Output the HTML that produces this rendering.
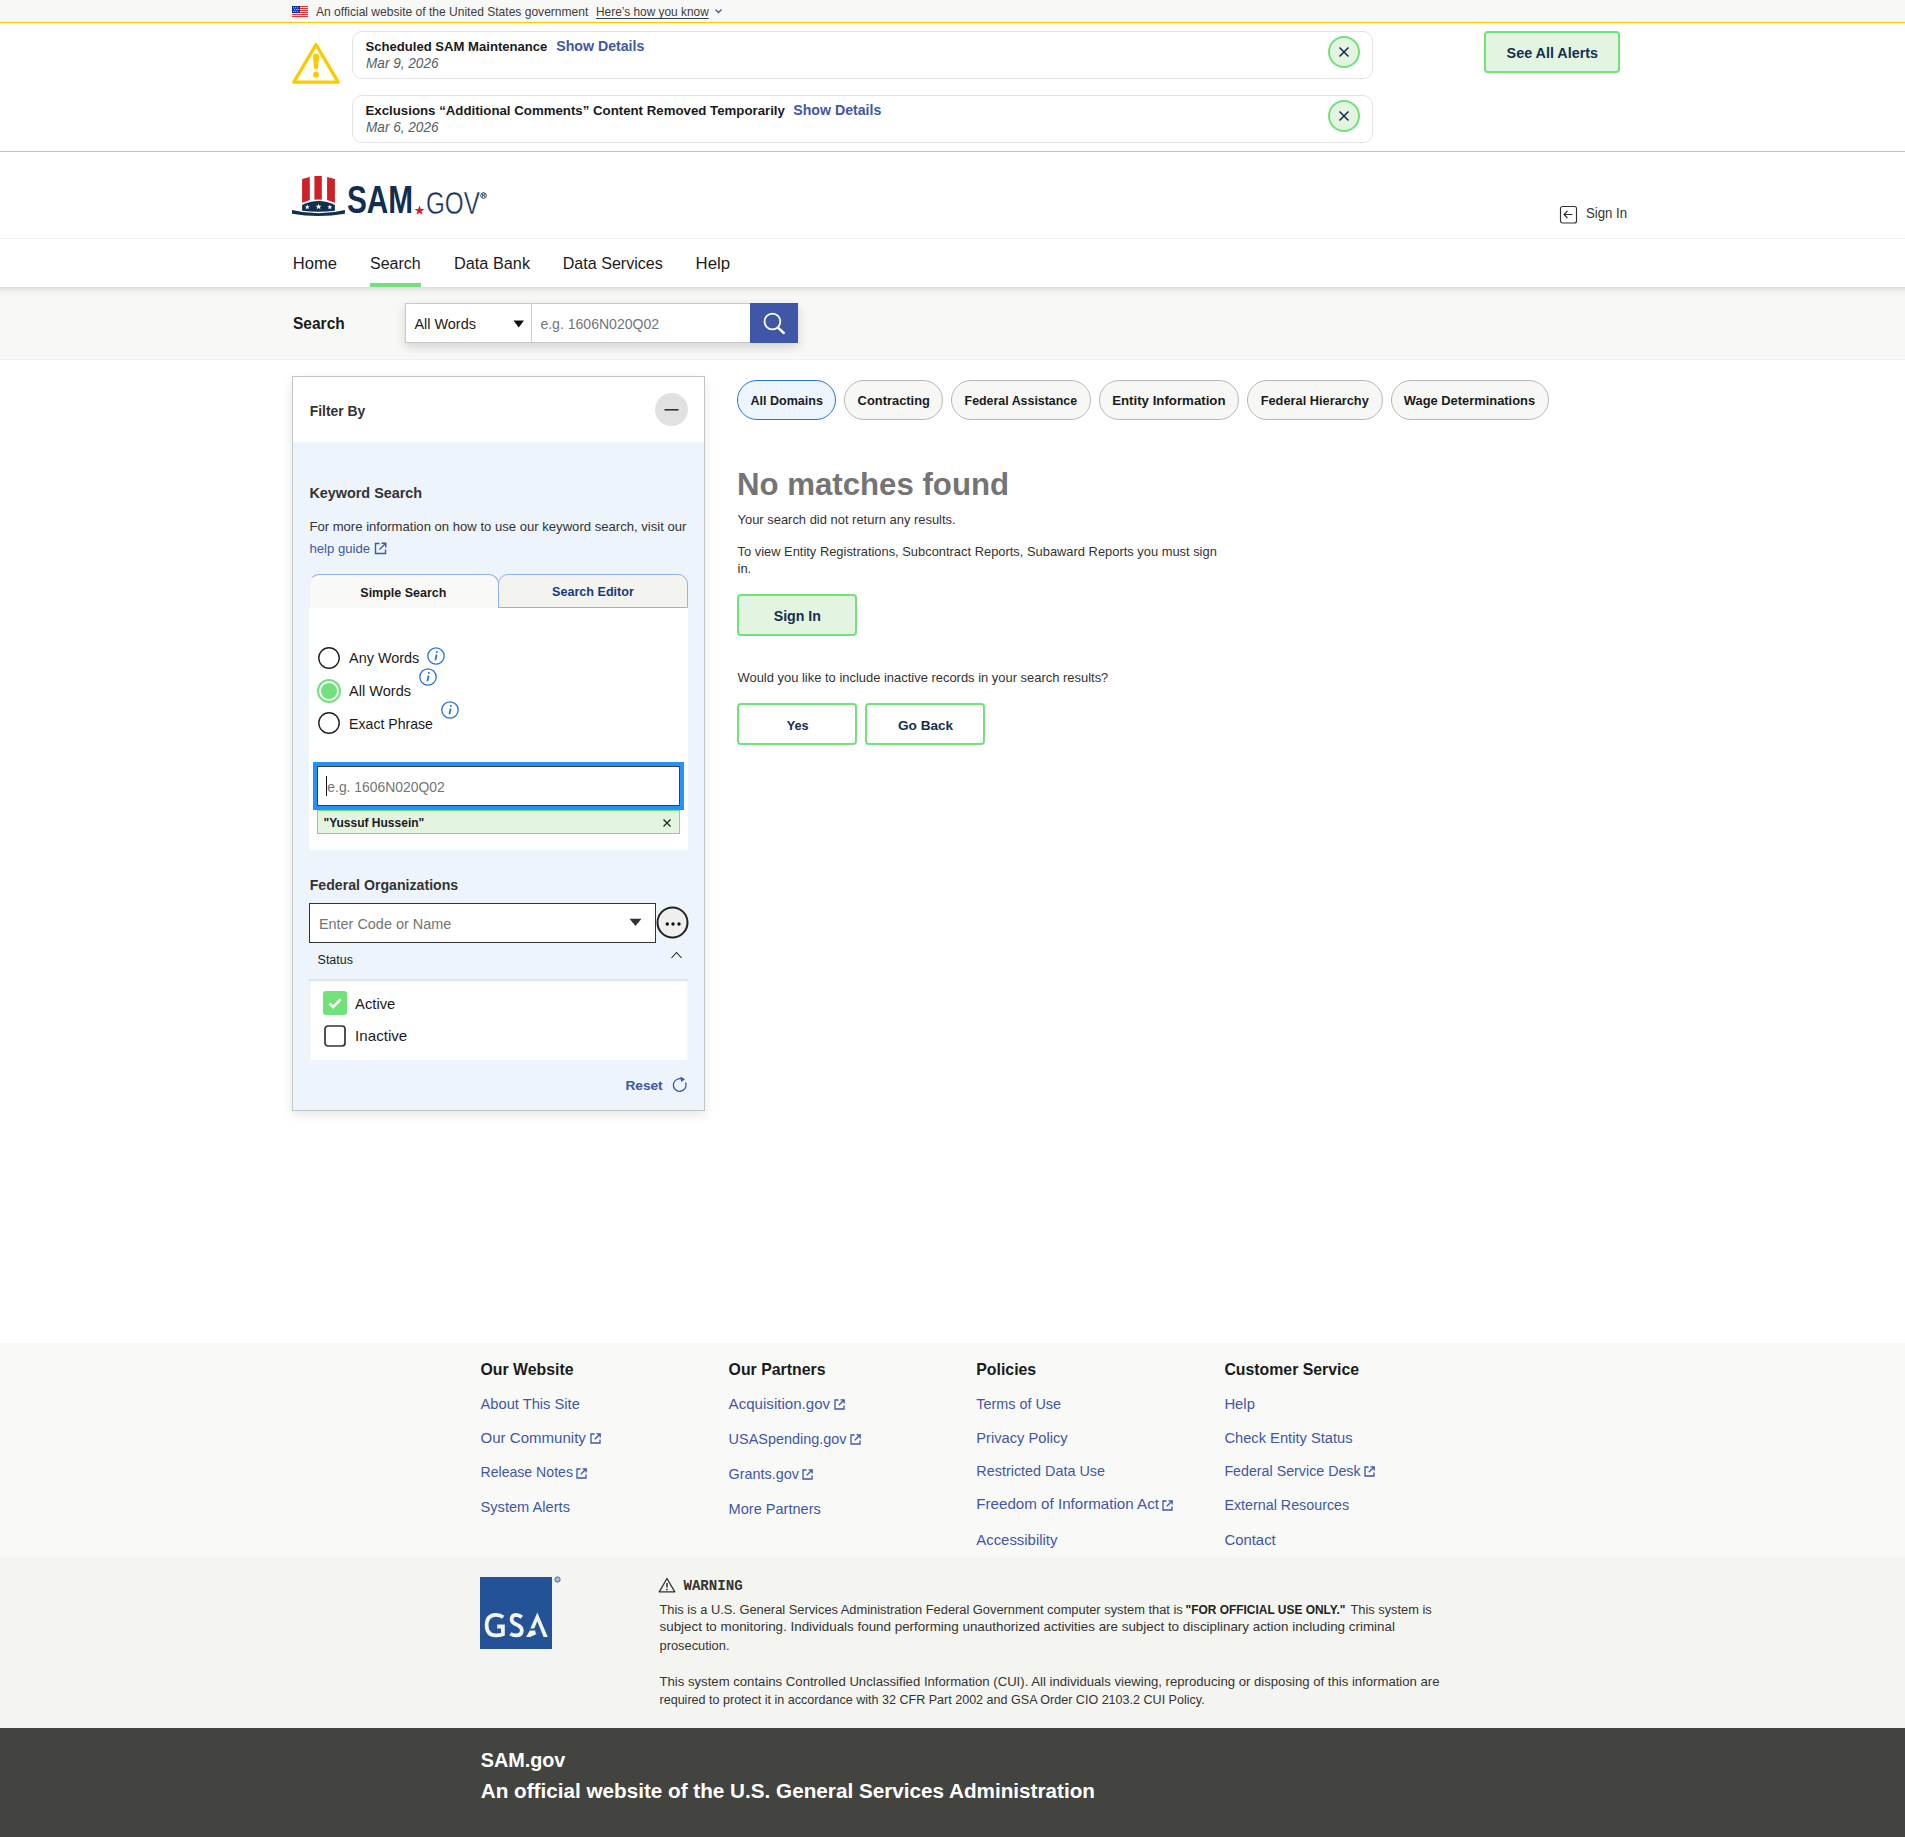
<!DOCTYPE html>
<html><head><meta charset="utf-8"><title>SAM.gov</title><style>
*{box-sizing:border-box}
html,body{margin:0;padding:0}
body{width:1905px;height:1837px;overflow:hidden;position:relative;background:#fff;font-family:"Liberation Sans",sans-serif}
.t{position:absolute;white-space:nowrap;line-height:1}
svg{display:block}
</style></head><body>
<div style="position:absolute;left:0px;top:0px;width:1905px;height:22px;background:#f8f8f6"></div>
<div style="position:absolute;left:0px;top:22px;width:1905px;height:1px;background:#fbcb00"></div>
<svg style="position:absolute;left:292px;top:6px;" width="16" height="11" viewBox="0 0 16 11"><rect x="0" y="0" width="16" height="11" fill="#fff"/><rect x="0" y="-0.1" width="16" height="1.2" fill="#d83933"/><rect x="0" y="1.9" width="16" height="1.2" fill="#d83933"/><rect x="0" y="3.9" width="16" height="1.2" fill="#d83933"/><rect x="0" y="5.9" width="16" height="1.2" fill="#d83933"/><rect x="0" y="7.9" width="16" height="1.2" fill="#d83933"/><rect x="0" y="9.9" width="16" height="1.2" fill="#d83933"/><rect x="0" y="0" width="8" height="7" fill="#0033a0"/><circle cx="1.7" cy="1.7" r="0.55" fill="#fff"/><circle cx="3.7" cy="1.7" r="0.55" fill="#fff"/><circle cx="5.7" cy="1.7" r="0.55" fill="#fff"/><circle cx="2.7" cy="3.5" r="0.55" fill="#fff"/><circle cx="4.7" cy="3.5" r="0.55" fill="#fff"/><circle cx="6.7" cy="3.5" r="0.55" fill="#fff"/><circle cx="1.7" cy="5.3" r="0.55" fill="#fff"/><circle cx="3.7" cy="5.3" r="0.55" fill="#fff"/><circle cx="5.7" cy="5.3" r="0.55" fill="#fff"/></svg>
<div class="t " style="left:316.0px;top:6px;font-size:12.05px;font-weight:normal;font-style:normal;font-family:'Liberation Sans',sans-serif;color:#3d3d3d;">An official website of the United States government</div>
<div class="t " style="left:596.0px;top:7px;font-size:11.9px;font-weight:normal;font-style:normal;font-family:'Liberation Sans',sans-serif;color:#3d3d3d;text-decoration:underline;text-underline-offset:2px;">Here&#8217;s how you know</div>
<svg style="position:absolute;left:714px;top:7px;" width="9" height="8" viewBox="0 0 9 8"><path d="M1.5 2.5 L4.5 5.5 L7.5 2.5" fill="none" stroke="#3f57a6" stroke-width="1.3"/></svg>
<div style="position:absolute;left:0px;top:151px;width:1905px;height:1px;background:#fbcb00"></div>
<svg style="position:absolute;left:291px;top:41px;" width="50" height="44" viewBox="0 0 50 44"><path d="M25 3.6 L47.2 41.2 L2.8 41.2 Z" fill="none" stroke="#fbcb00" stroke-width="3.3" stroke-linejoin="round"/><path d="M22 15.5 Q22 12.6 25 12.6 Q28 12.6 28 15.5 L27 27.5 Q25 28.8 23 27.5 Z" fill="#fbcb00"/><circle cx="25" cy="33.8" r="3" fill="#fbcb00"/></svg>
<div style="position:absolute;left:352px;top:31px;width:1021px;height:48px;border:1px solid #e2e2e2;border-radius:10px;background:#fff"></div>
<div class="t " style="left:365.5px;top:40px;font-size:13.1px;font-weight:bold;font-style:normal;font-family:'Liberation Sans',sans-serif;color:#1b1b1b;">Scheduled SAM Maintenance</div>
<div class="t " style="left:556.3px;top:39px;font-size:14.15px;font-weight:bold;font-style:normal;font-family:'Liberation Sans',sans-serif;color:#3f57a6;">Show Details</div>
<div class="t " style="left:365.5px;top:56px;font-size:14.4px;font-weight:normal;font-style:italic;font-family:'Liberation Sans',sans-serif;color:#565c65;transform:scaleX(0.9442);transform-origin:0 0;">Mar 9, 2026</div>
<svg style="position:absolute;left:1327px;top:35px;" width="34" height="34" viewBox="0 0 34 34"><circle cx="17" cy="17" r="15" fill="#e3f5e1" stroke="#70e17b" stroke-width="2"/><path d="M12.5 12.5 L21.5 21.5 M21.5 12.5 L12.5 21.5" stroke="#162e51" stroke-width="1.6"/></svg>
<div style="position:absolute;left:352px;top:95px;width:1021px;height:48px;border:1px solid #e2e2e2;border-radius:10px;background:#fff"></div>
<div class="t " style="left:365.5px;top:104px;font-size:13.25px;font-weight:bold;font-style:normal;font-family:'Liberation Sans',sans-serif;color:#1b1b1b;">Exclusions &#8220;Additional Comments&#8221; Content Removed Temporarily</div>
<div class="t " style="left:793.3px;top:103px;font-size:14.15px;font-weight:bold;font-style:normal;font-family:'Liberation Sans',sans-serif;color:#3f57a6;">Show Details</div>
<div class="t " style="left:365.5px;top:120px;font-size:14.4px;font-weight:normal;font-style:italic;font-family:'Liberation Sans',sans-serif;color:#565c65;transform:scaleX(0.9442);transform-origin:0 0;">Mar 6, 2026</div>
<svg style="position:absolute;left:1327px;top:99px;" width="34" height="34" viewBox="0 0 34 34"><circle cx="17" cy="17" r="15" fill="#e3f5e1" stroke="#70e17b" stroke-width="2"/><path d="M12.5 12.5 L21.5 21.5 M21.5 12.5 L12.5 21.5" stroke="#162e51" stroke-width="1.6"/></svg>
<div style="position:absolute;left:1484px;top:31px;width:136px;height:42px;border:2px solid #70e17b;border-radius:4px;background:#e3f5e1"></div>
<div class="t " style="left:1506.6px;top:46px;font-size:14.35px;font-weight:bold;font-style:normal;font-family:'Liberation Sans',sans-serif;color:#162e51;">See All Alerts</div>
<svg style="position:absolute;left:288px;top:170px;" width="64" height="52" viewBox="0 0 64 52"><path d="M14.1 9.1 L21.8 6.9 L21.8 29.9 L14.1 32.8 Z" fill="#cd2027"/><path d="M26.4 6 L33.8 6 L33.8 29.7 Q30.1 29.1 26.4 29.7 Z" fill="#cd2027"/><path d="M39.1 6.9 L46.9 9.1 L46.9 32.8 L39.1 29.9 Z" fill="#cd2027"/><path d="M14.1 34.9 Q30.5 27.3 46.9 34.9 L46.9 40.8 Q30.5 42.6 14.1 40.8 Z" fill="#122e51"/><polygon points="19.30,34.60 19.94,36.32 21.77,36.40 20.34,37.54 20.83,39.30 19.30,38.29 17.77,39.30 18.26,37.54 16.83,36.40 18.66,36.32" fill="#fff"/><polygon points="30.60,33.70 31.37,35.75 33.55,35.84 31.84,37.20 32.42,39.31 30.60,38.10 28.78,39.31 29.36,37.20 27.65,35.84 29.83,35.75" fill="#fff"/><polygon points="41.80,34.60 42.44,36.32 44.27,36.40 42.84,37.54 43.33,39.30 41.80,38.29 40.27,39.30 40.76,37.54 39.33,36.40 41.16,36.32" fill="#fff"/><path d="M4 40 Q30.4 46.6 56.9 40 L56.9 43.7 Q30.4 48.1 4 43.7 Z" fill="#122e51"/></svg>
<div class="t " style="left:347.0px;top:181px;font-size:38.4px;font-weight:bold;font-style:normal;font-family:'Liberation Sans',sans-serif;color:#112e51;transform:scaleX(0.775);transform-origin:0 0;letter-spacing:0px;">SAM</div>
<svg style="position:absolute;left:414px;top:205px;" width="11" height="11" viewBox="0 0 11 11"><path d="M5.5 0.5 l1.3 3.4 3.6 .1 -2.9 2.2 1 3.5 -3-2 -3 2 1-3.5 -2.9-2.2 3.6-.1z" fill="#d61f2b"/></svg>
<div class="t " style="left:425.5px;top:188px;font-size:30.5px;font-weight:normal;font-style:normal;font-family:'Liberation Sans',sans-serif;color:#112e51;transform:scaleX(0.795);transform-origin:0 0;-webkit-text-stroke:0.4px #fff;">GOV</div>
<svg style="position:absolute;left:480px;top:192px;" width="8" height="8" viewBox="0 0 8 8"><circle cx="3.5" cy="3.5" r="2.8" fill="none" stroke="#112e51" stroke-width="0.9"/><path d="M2.5 5.2 V2 H4 Q5 2 5 2.8 Q5 3.6 4 3.6 H2.5 M3.8 3.6 L5 5.2" fill="none" stroke="#112e51" stroke-width="0.7"/></svg>
<svg style="position:absolute;left:1559px;top:205px;" width="19" height="19" viewBox="0 0 19 19"><rect x="1.5" y="1.5" width="16" height="16.5" rx="2" fill="none" stroke="#333" stroke-width="1.15"/><path d="M5 9.5 H13.5 M8.5 6 L5 9.5 L8.5 13" fill="none" stroke="#333" stroke-width="1.2"/></svg>
<div class="t " style="left:1586.1px;top:205px;font-size:15.1px;font-weight:normal;font-style:normal;font-family:'Liberation Sans',sans-serif;color:#333;transform:scaleX(0.8750);transform-origin:0 0;">Sign In</div>
<div style="position:absolute;left:0px;top:238px;width:1905px;height:1px;background:#f2f2ee"></div>
<div style="position:absolute;left:0px;top:239px;width:1905px;height:48px;background:#fff"></div>
<div class="t " style="left:292.7px;top:256px;font-size:16.6px;font-weight:normal;font-style:normal;font-family:'Liberation Sans',sans-serif;color:#1b1b1b;z-index:3;">Home</div>
<div class="t " style="left:370.0px;top:256px;font-size:16.0px;font-weight:normal;font-style:normal;font-family:'Liberation Sans',sans-serif;color:#1b1b1b;z-index:3;">Search</div>
<div class="t " style="left:454.0px;top:255px;font-size:16.3px;font-weight:normal;font-style:normal;font-family:'Liberation Sans',sans-serif;color:#1b1b1b;z-index:3;">Data Bank</div>
<div class="t " style="left:562.7px;top:255px;font-size:16.1px;font-weight:normal;font-style:normal;font-family:'Liberation Sans',sans-serif;color:#1b1b1b;z-index:3;">Data Services</div>
<div class="t " style="left:695.6px;top:256px;font-size:16.75px;font-weight:normal;font-style:normal;font-family:'Liberation Sans',sans-serif;color:#1b1b1b;z-index:3;">Help</div>
<div style="position:absolute;left:370px;top:283px;width:51px;height:4px;background:#70e17b;z-index:3"></div>
<div style="position:absolute;left:0px;top:287px;width:1905px;height:73px;background:#f8f8f6"></div>
<div style="position:absolute;left:0px;top:359px;width:1905px;height:1px;background:#f1f1ed"></div>
<div style="position:absolute;left:0px;top:287px;width:1905px;height:9px;background:linear-gradient(rgba(0,0,0,0.11),rgba(0,0,0,0.03) 50%,rgba(0,0,0,0))"></div>
<div class="t " style="left:292.5px;top:315px;font-size:17.3px;font-weight:bold;font-style:normal;font-family:'Liberation Sans',sans-serif;color:#1b1b1b;transform:scaleX(0.8977);transform-origin:0 0;">Search</div>
<div style="position:absolute;left:405px;top:303px;width:393px;height:40px;box-shadow:0 4px 10px rgba(0,0,0,0.15);background:#fff"></div>
<div style="position:absolute;left:405px;top:303px;width:127px;height:40px;border:1px solid #c9c9c9;background:#fff"></div>
<div class="t " style="left:414.4px;top:317px;font-size:14.45px;font-weight:normal;font-style:normal;font-family:'Liberation Sans',sans-serif;color:#1b1b1b;">All Words</div>
<svg style="position:absolute;left:513px;top:320px;" width="12" height="8" viewBox="0 0 12 8"><path d="M0.5 0.5 L11 0.5 L5.75 7.5 Z" fill="#111"/></svg>
<div style="position:absolute;left:531px;top:303px;width:220px;height:40px;border:1px solid #c9c9c9;border-left:1px solid #d0d0d0;background:#fff"></div>
<div class="t " style="left:540.4px;top:317px;font-size:14.05px;font-weight:normal;font-style:normal;font-family:'Liberation Sans',sans-serif;color:#71767a;">e.g. 1606N020Q02</div>
<div style="position:absolute;left:750px;top:303px;width:48px;height:40px;background:#4057a7"></div>
<svg style="position:absolute;left:762px;top:312px;" width="26" height="26" viewBox="0 0 26 26"><circle cx="10.4" cy="9.5" r="7.9" fill="none" stroke="#fff" stroke-width="1.8"/><path d="M16 15.6 L21.8 21" stroke="#fff" stroke-width="2.4" stroke-linecap="round"/></svg>
<div style="position:absolute;left:292px;top:376px;width:413px;height:735px;border:1px solid #c4c4c4;background:#edf4fb;box-shadow:0 4px 10px rgba(0,0,0,0.1)"></div>
<div style="position:absolute;left:293px;top:377px;width:411px;height:65px;background:#fff"></div>
<div class="t " style="left:309.7px;top:405px;font-size:13.9px;font-weight:bold;font-style:normal;font-family:'Liberation Sans',sans-serif;color:#333;">Filter By</div>
<svg style="position:absolute;left:655px;top:393px;" width="33" height="33" viewBox="0 0 33 33"><circle cx="16.5" cy="16.5" r="16.5" fill="#e1e1e1"/><path d="M9.5 16.8 H23.5" stroke="#112e51" stroke-width="1.5"/></svg>
<div class="t " style="left:309.4px;top:486px;font-size:14.4px;font-weight:bold;font-style:normal;font-family:'Liberation Sans',sans-serif;color:#333;">Keyword Search</div>
<div class="t " style="left:309.4px;top:520px;font-size:13.1px;font-weight:normal;font-style:normal;font-family:'Liberation Sans',sans-serif;color:#333;">For more information on how to use our keyword search, visit our</div>
<div class="t " style="left:309.4px;top:542px;font-size:13.15px;font-weight:normal;font-style:normal;font-family:'Liberation Sans',sans-serif;color:#3f57a6;">help guide</div>
<svg style="position:absolute;left:374px;top:542px;" width="13" height="13" viewBox="0 0 13 13"><path d="M5.5 1.5 H1.5 V11.5 H11.5 V7.5" fill="none" stroke="#3f57a6" stroke-width="1.4"/><path d="M7.5 1.2 H11.8 V5.5 M11.5 1.5 L5.5 7.5" fill="none" stroke="#3f57a6" stroke-width="1.4"/></svg>
<div style="position:absolute;left:309px;top:574px;width:190px;height:34px;border:1px solid #8fb3f0;border-bottom:none;border-left-color:rgba(143,179,240,0.15);border-radius:10px 10px 0 0;background:#f9f9f7"></div>
<div style="position:absolute;left:498px;top:574px;width:190px;height:34px;border:1px solid #8fb3f0;border-radius:10px 10px 0 0;background:#f3f4ef"></div>
<div class="t " style="left:360.3px;top:587px;font-size:12.5px;font-weight:bold;font-style:normal;font-family:'Liberation Sans',sans-serif;color:#1b1b1b;">Simple Search</div>
<div class="t " style="left:552.0px;top:586px;font-size:12.6px;font-weight:bold;font-style:normal;font-family:'Liberation Sans',sans-serif;color:#1a3a78;">Search Editor</div>
<div style="position:absolute;left:309px;top:608px;width:379px;height:242px;background:#fff"></div>
<svg style="position:absolute;left:318px;top:647px;" width="22" height="22" viewBox="0 0 22 22"><circle cx="11" cy="11" r="10.2" fill="#fff" stroke="#222" stroke-width="1.4"/></svg>
<svg style="position:absolute;left:317px;top:679px;" width="24" height="24" viewBox="0 0 24 24"><circle cx="12" cy="12" r="11" fill="#fff" stroke="#70e17b" stroke-width="2"/><circle cx="12" cy="12" r="8" fill="#70e17b"/></svg>
<svg style="position:absolute;left:318px;top:712px;" width="22" height="22" viewBox="0 0 22 22"><circle cx="11" cy="11" r="10.2" fill="#fff" stroke="#222" stroke-width="1.4"/></svg>
<div class="t " style="left:349.1px;top:651px;font-size:14.4px;font-weight:normal;font-style:normal;font-family:'Liberation Sans',sans-serif;color:#1b1b1b;">Any Words</div>
<div class="t " style="left:349.1px;top:684px;font-size:14.55px;font-weight:normal;font-style:normal;font-family:'Liberation Sans',sans-serif;color:#1b1b1b;">All Words</div>
<div class="t " style="left:349.1px;top:717px;font-size:14.1px;font-weight:normal;font-style:normal;font-family:'Liberation Sans',sans-serif;color:#1b1b1b;">Exact Phrase</div>
<svg style="position:absolute;left:427px;top:647px;" width="18" height="18" viewBox="0 0 18 18"><circle cx="9" cy="9" r="8.2" fill="none" stroke="#2672de" stroke-width="1.3"/><path d="M9.6 7.5 L8.4 13.2" stroke="#2672de" stroke-width="1.7"/><circle cx="9.9" cy="5" r="1" fill="#2672de"/></svg>
<svg style="position:absolute;left:419px;top:668px;" width="18" height="18" viewBox="0 0 18 18"><circle cx="9" cy="9" r="8.2" fill="none" stroke="#2672de" stroke-width="1.3"/><path d="M9.6 7.5 L8.4 13.2" stroke="#2672de" stroke-width="1.7"/><circle cx="9.9" cy="5" r="1" fill="#2672de"/></svg>
<svg style="position:absolute;left:441px;top:701px;" width="18" height="18" viewBox="0 0 18 18"><circle cx="9" cy="9" r="8.2" fill="none" stroke="#2672de" stroke-width="1.3"/><path d="M9.6 7.5 L8.4 13.2" stroke="#2672de" stroke-width="1.7"/><circle cx="9.9" cy="5" r="1" fill="#2672de"/></svg>
<div style="position:absolute;left:313px;top:762px;width:371px;height:48px;background:#2491ff"></div>
<div style="position:absolute;left:317px;top:766px;width:363px;height:40px;border:1px solid #3d3d3d;background:#fff"></div>
<div style="position:absolute;left:326px;top:776px;width:1px;height:20px;background:#111"></div>
<div class="t " style="left:327.3px;top:781px;font-size:13.9px;font-weight:normal;font-style:normal;font-family:'Liberation Sans',sans-serif;color:#71767a;">e.g. 1606N020Q02</div>
<div style="position:absolute;left:317px;top:810px;width:363px;height:24px;border:1px solid #70e17b;background:#e3f5e1"></div>
<div class="t " style="left:323.5px;top:817px;font-size:12.0px;font-weight:bold;font-style:normal;font-family:'Liberation Sans',sans-serif;color:#1b1b1b;">&quot;Yussuf Hussein&quot;</div>
<svg style="position:absolute;left:662px;top:818px;" width="10" height="10" viewBox="0 0 10 10"><path d="M1.5 1.5 L8.5 8.5 M8.5 1.5 L1.5 8.5" stroke="#222" stroke-width="1.3"/></svg>
<div class="t " style="left:309.7px;top:878px;font-size:14.15px;font-weight:bold;font-style:normal;font-family:'Liberation Sans',sans-serif;color:#333;">Federal Organizations</div>
<div style="position:absolute;left:309px;top:903px;width:347px;height:40px;border:1px solid #333;background:#fff"></div>
<div class="t " style="left:318.9px;top:917px;font-size:14.45px;font-weight:normal;font-style:normal;font-family:'Liberation Sans',sans-serif;color:#757575;">Enter Code or Name</div>
<svg style="position:absolute;left:629px;top:918px;" width="14" height="9" viewBox="0 0 14 9"><path d="M0.5 0.8 L12.5 0.8 L6.5 8 Z" fill="#333"/></svg>
<svg style="position:absolute;left:656px;top:906px;" width="33" height="33" viewBox="0 0 33 33"><circle cx="16.5" cy="16.5" r="15" fill="#efefef" stroke="#222" stroke-width="2"/><circle cx="11.3" cy="18" r="1.7" fill="#111"/><circle cx="17" cy="18" r="1.7" fill="#111"/><circle cx="23" cy="18" r="1.7" fill="#111"/></svg>
<div class="t " style="left:317.6px;top:954px;font-size:12.45px;font-weight:normal;font-style:normal;font-family:'Liberation Sans',sans-serif;color:#1b1b1b;">Status</div>
<svg style="position:absolute;left:670px;top:950px;" width="13" height="10" viewBox="0 0 13 10"><path d="M1.5 8 L6.5 2.5 L11.5 8" fill="none" stroke="#222" stroke-width="1.1"/></svg>
<div style="position:absolute;left:309px;top:979px;width:379px;height:81px;background:#fff;box-shadow:inset 0 2px 2px rgba(0,0,0,0.12), inset 1px 0 1px rgba(0,0,0,0.05)"></div>
<svg style="position:absolute;left:323px;top:991px;" width="24" height="24" viewBox="0 0 24 24"><rect x="0" y="0" width="24" height="24" rx="3" fill="#70e17b"/><path d="M6.5 12.5 L10.2 16 L17.5 8.5" fill="none" stroke="#fff" stroke-width="2.6"/></svg>
<svg style="position:absolute;left:324px;top:1025px;" width="22" height="22" viewBox="0 0 22 22"><rect x="1" y="1" width="20" height="20" rx="3" fill="#fff" stroke="#333" stroke-width="1.7"/></svg>
<div class="t " style="left:355.1px;top:997px;font-size:14.75px;font-weight:normal;font-style:normal;font-family:'Liberation Sans',sans-serif;color:#1b1b1b;">Active</div>
<div class="t " style="left:355.1px;top:1028px;font-size:15.15px;font-weight:normal;font-style:normal;font-family:'Liberation Sans',sans-serif;color:#1b1b1b;">Inactive</div>
<div class="t " style="left:625.5px;top:1079px;font-size:13.65px;font-weight:bold;font-style:normal;font-family:'Liberation Sans',sans-serif;color:#3f57a6;">Reset</div>
<svg style="position:absolute;left:672px;top:1075px;" width="16" height="17" viewBox="0 0 16 17"><path d="M10.8 4.5 A6.3 6.3 0 1 0 13.5 7.5" fill="none" stroke="#3f57a6" stroke-width="1.3"/><path d="M8.5 1.5 L13 4.3 L9.2 7 Z" fill="#3f57a6"/></svg>
<div style="position:absolute;left:737px;top:380px;width:99px;height:40px;border:1px solid #2672de;border-radius:20px;background:#edf5ff"></div>
<div class="t " style="left:750.4px;top:395px;font-size:12.55px;font-weight:bold;font-style:normal;font-family:'Liberation Sans',sans-serif;color:#1b1b1b;">All Domains</div>
<div style="position:absolute;left:844px;top:380px;width:99px;height:40px;border:1px solid #b8b8b8;border-radius:20px;background:#f7f7f5"></div>
<div class="t " style="left:857.6px;top:395px;font-size:12.9px;font-weight:bold;font-style:normal;font-family:'Liberation Sans',sans-serif;color:#1b1b1b;">Contracting</div>
<div style="position:absolute;left:951px;top:380px;width:140px;height:40px;border:1px solid #b8b8b8;border-radius:20px;background:#f7f7f5"></div>
<div class="t " style="left:964.6px;top:395px;font-size:12.4px;font-weight:bold;font-style:normal;font-family:'Liberation Sans',sans-serif;color:#1b1b1b;">Federal Assistance</div>
<div style="position:absolute;left:1099px;top:380px;width:140px;height:40px;border:1px solid #b8b8b8;border-radius:20px;background:#f7f7f5"></div>
<div class="t " style="left:1112.2px;top:394px;font-size:13.25px;font-weight:bold;font-style:normal;font-family:'Liberation Sans',sans-serif;color:#1b1b1b;">Entity Information</div>
<div style="position:absolute;left:1247px;top:380px;width:136px;height:40px;border:1px solid #b8b8b8;border-radius:20px;background:#f7f7f5"></div>
<div class="t " style="left:1260.7px;top:395px;font-size:12.8px;font-weight:bold;font-style:normal;font-family:'Liberation Sans',sans-serif;color:#1b1b1b;">Federal Hierarchy</div>
<div style="position:absolute;left:1391px;top:380px;width:158px;height:40px;border:1px solid #b8b8b8;border-radius:20px;background:#f7f7f5"></div>
<div class="t " style="left:1403.8px;top:395px;font-size:12.9px;font-weight:bold;font-style:normal;font-family:'Liberation Sans',sans-serif;color:#1b1b1b;">Wage Determinations</div>
<div class="t " style="left:737.0px;top:469px;font-size:31.2px;font-weight:bold;font-style:normal;font-family:'Liberation Sans',sans-serif;color:#747474;">No matches found</div>
<div class="t " style="left:737.5px;top:514px;font-size:12.95px;font-weight:normal;font-style:normal;font-family:'Liberation Sans',sans-serif;color:#333;">Your search did not return any results.</div>
<div class="t " style="left:737.5px;top:546px;font-size:12.9px;font-weight:normal;font-style:normal;font-family:'Liberation Sans',sans-serif;color:#333;">To view Entity Registrations, Subcontract Reports, Subaward Reports you must sign</div>
<div class="t " style="left:737.5px;top:562px;font-size:13.0px;font-weight:normal;font-style:normal;font-family:'Liberation Sans',sans-serif;color:#333;">in.</div>
<div style="position:absolute;left:737px;top:594px;width:120px;height:42px;border:2px solid #70e17b;border-radius:4px;background:#e3f5e1"></div>
<div class="t " style="left:773.7px;top:609px;font-size:14.2px;font-weight:bold;font-style:normal;font-family:'Liberation Sans',sans-serif;color:#162e51;">Sign In</div>
<div class="t " style="left:737.5px;top:672px;font-size:12.95px;font-weight:normal;font-style:normal;font-family:'Liberation Sans',sans-serif;color:#333;">Would you like to include inactive records in your search results?</div>
<div style="position:absolute;left:737px;top:703px;width:120px;height:42px;border:2px solid #70e17b;border-radius:4px;background:#fff"></div>
<div style="position:absolute;left:865px;top:703px;width:120px;height:42px;border:2px solid #70e17b;border-radius:4px;background:#fff"></div>
<div class="t " style="left:786.7px;top:720px;font-size:12.75px;font-weight:bold;font-style:normal;font-family:'Liberation Sans',sans-serif;color:#162e51;">Yes</div>
<div class="t " style="left:898.0px;top:719px;font-size:13.6px;font-weight:bold;font-style:normal;font-family:'Liberation Sans',sans-serif;color:#162e51;">Go Back</div>
<div style="position:absolute;left:0px;top:1343px;width:1905px;height:214px;background:#f9f9f7"></div>
<div class="t " style="left:480.5px;top:1362px;font-size:15.85px;font-weight:bold;font-style:normal;font-family:'Liberation Sans',sans-serif;color:#1b1b1b;">Our Website</div>
<div class="t " style="left:480.5px;top:1397px;font-size:14.7px;font-weight:normal;font-style:normal;font-family:'Liberation Sans',sans-serif;color:#3f57a6;">About This Site</div>
<div class="t " style="left:480.5px;top:1430px;font-size:15.05px;font-weight:normal;font-style:normal;font-family:'Liberation Sans',sans-serif;color:#3f57a6;">Our Community</div>
<svg style="position:absolute;left:590px;top:1433px;" width="11" height="11" viewBox="0 0 11 11"><path d="M4.5 1 H1 V10 H10 V6.5" fill="none" stroke="#3f57a6" stroke-width="1.3"/><path d="M6.5 .8 H10.2 V4.5 M10 1 L4.8 6.2" fill="none" stroke="#3f57a6" stroke-width="1.3"/></svg>
<div class="t " style="left:480.5px;top:1465px;font-size:14.1px;font-weight:normal;font-style:normal;font-family:'Liberation Sans',sans-serif;color:#3f57a6;">Release Notes</div>
<svg style="position:absolute;left:576px;top:1468px;" width="11" height="11" viewBox="0 0 11 11"><path d="M4.5 1 H1 V10 H10 V6.5" fill="none" stroke="#3f57a6" stroke-width="1.3"/><path d="M6.5 .8 H10.2 V4.5 M10 1 L4.8 6.2" fill="none" stroke="#3f57a6" stroke-width="1.3"/></svg>
<div class="t " style="left:480.5px;top:1500px;font-size:14.65px;font-weight:normal;font-style:normal;font-family:'Liberation Sans',sans-serif;color:#3f57a6;">System Alerts</div>
<div class="t " style="left:728.6px;top:1362px;font-size:15.85px;font-weight:bold;font-style:normal;font-family:'Liberation Sans',sans-serif;color:#1b1b1b;">Our Partners</div>
<div class="t " style="left:728.6px;top:1396px;font-size:15.1px;font-weight:normal;font-style:normal;font-family:'Liberation Sans',sans-serif;color:#3f57a6;">Acquisition.gov</div>
<svg style="position:absolute;left:834px;top:1399px;" width="11" height="11" viewBox="0 0 11 11"><path d="M4.5 1 H1 V10 H10 V6.5" fill="none" stroke="#3f57a6" stroke-width="1.3"/><path d="M6.5 .8 H10.2 V4.5 M10 1 L4.8 6.2" fill="none" stroke="#3f57a6" stroke-width="1.3"/></svg>
<div class="t " style="left:728.6px;top:1432px;font-size:14.45px;font-weight:normal;font-style:normal;font-family:'Liberation Sans',sans-serif;color:#3f57a6;">USASpending.gov</div>
<svg style="position:absolute;left:850px;top:1434px;" width="11" height="11" viewBox="0 0 11 11"><path d="M4.5 1 H1 V10 H10 V6.5" fill="none" stroke="#3f57a6" stroke-width="1.3"/><path d="M6.5 .8 H10.2 V4.5 M10 1 L4.8 6.2" fill="none" stroke="#3f57a6" stroke-width="1.3"/></svg>
<div class="t " style="left:728.6px;top:1467px;font-size:14.4px;font-weight:normal;font-style:normal;font-family:'Liberation Sans',sans-serif;color:#3f57a6;">Grants.gov</div>
<svg style="position:absolute;left:802px;top:1469px;" width="11" height="11" viewBox="0 0 11 11"><path d="M4.5 1 H1 V10 H10 V6.5" fill="none" stroke="#3f57a6" stroke-width="1.3"/><path d="M6.5 .8 H10.2 V4.5 M10 1 L4.8 6.2" fill="none" stroke="#3f57a6" stroke-width="1.3"/></svg>
<div class="t " style="left:728.6px;top:1502px;font-size:14.55px;font-weight:normal;font-style:normal;font-family:'Liberation Sans',sans-serif;color:#3f57a6;">More Partners</div>
<div class="t " style="left:976.3px;top:1362px;font-size:15.85px;font-weight:bold;font-style:normal;font-family:'Liberation Sans',sans-serif;color:#1b1b1b;">Policies</div>
<div class="t " style="left:976.3px;top:1397px;font-size:14.4px;font-weight:normal;font-style:normal;font-family:'Liberation Sans',sans-serif;color:#3f57a6;">Terms of Use</div>
<div class="t " style="left:976.3px;top:1431px;font-size:14.7px;font-weight:normal;font-style:normal;font-family:'Liberation Sans',sans-serif;color:#3f57a6;">Privacy Policy</div>
<div class="t " style="left:976.3px;top:1464px;font-size:14.4px;font-weight:normal;font-style:normal;font-family:'Liberation Sans',sans-serif;color:#3f57a6;">Restricted Data Use</div>
<div class="t " style="left:976.3px;top:1496px;font-size:15.15px;font-weight:normal;font-style:normal;font-family:'Liberation Sans',sans-serif;color:#3f57a6;">Freedom of Information Act</div>
<svg style="position:absolute;left:1162px;top:1500px;" width="11" height="11" viewBox="0 0 11 11"><path d="M4.5 1 H1 V10 H10 V6.5" fill="none" stroke="#3f57a6" stroke-width="1.3"/><path d="M6.5 .8 H10.2 V4.5 M10 1 L4.8 6.2" fill="none" stroke="#3f57a6" stroke-width="1.3"/></svg>
<div class="t " style="left:976.3px;top:1533px;font-size:14.9px;font-weight:normal;font-style:normal;font-family:'Liberation Sans',sans-serif;color:#3f57a6;">Accessibility</div>
<div class="t " style="left:1224.4px;top:1362px;font-size:15.85px;font-weight:bold;font-style:normal;font-family:'Liberation Sans',sans-serif;color:#1b1b1b;">Customer Service</div>
<div class="t " style="left:1224.4px;top:1397px;font-size:14.85px;font-weight:normal;font-style:normal;font-family:'Liberation Sans',sans-serif;color:#3f57a6;">Help</div>
<div class="t " style="left:1224.4px;top:1431px;font-size:14.7px;font-weight:normal;font-style:normal;font-family:'Liberation Sans',sans-serif;color:#3f57a6;">Check Entity Status</div>
<div class="t " style="left:1224.4px;top:1464px;font-size:14.25px;font-weight:normal;font-style:normal;font-family:'Liberation Sans',sans-serif;color:#3f57a6;">Federal Service Desk</div>
<svg style="position:absolute;left:1364px;top:1466px;" width="11" height="11" viewBox="0 0 11 11"><path d="M4.5 1 H1 V10 H10 V6.5" fill="none" stroke="#3f57a6" stroke-width="1.3"/><path d="M6.5 .8 H10.2 V4.5 M10 1 L4.8 6.2" fill="none" stroke="#3f57a6" stroke-width="1.3"/></svg>
<div class="t " style="left:1224.4px;top:1498px;font-size:14.3px;font-weight:normal;font-style:normal;font-family:'Liberation Sans',sans-serif;color:#3f57a6;">External Resources</div>
<div class="t " style="left:1224.4px;top:1533px;font-size:14.9px;font-weight:normal;font-style:normal;font-family:'Liberation Sans',sans-serif;color:#3f57a6;">Contact</div>
<div style="position:absolute;left:0px;top:1557px;width:1905px;height:171px;background:#f4f5f0"></div>
<svg style="position:absolute;left:480px;top:1577px;" width="72" height="72" viewBox="0 0 72 72"><rect x="0" y="0" width="72" height="72" fill="#235296"/><path d="M23.2 40.2 Q20 37.7 15.5 37.8 Q6.8 38.2 6.6 48.2 Q6.8 58.2 15.5 58.4 Q20 58.5 22.9 57.2 L22.9 49.5 L17.2 49.5" fill="none" stroke="#f4f4ef" stroke-width="3.8"/><path d="M41.8 40.2 Q39 37.8 36 37.8 Q31.6 37.9 31.6 42.3 Q31.8 45.5 36.5 47.6 Q41.8 49.8 41.8 53.6 Q41.6 58.4 36 58.4 Q32.6 58.4 30.4 56.6" fill="none" stroke="#f4f4ef" stroke-width="3.8"/><polygon points="57.3,35.6 67.8,60 63.6,60 57.3,44.3 54.3,51.5 50.3,51.5" fill="#f4f4ef"/><polygon points="49.9,53.6 55.2,53.6 56,57.6 62.6,54.2 50.2,60 46,60" fill="#f4f4ef"/><polygon points="60.5,53.5 66,51.8" fill="#f4f4ef"/></svg>
<svg style="position:absolute;left:554px;top:1576px;" width="7" height="7" viewBox="0 0 7 7"><circle cx="3.5" cy="3.5" r="2.7" fill="#aab6d0" stroke="#4a6aa8" stroke-width="0.9"/></svg>
<svg style="position:absolute;left:658px;top:1577px;" width="18" height="16" viewBox="0 0 18 16"><path d="M9 1.5 L16.8 14.8 H1.2 Z" fill="none" stroke="#333" stroke-width="1.3" stroke-linejoin="round"/><path d="M9 6 V10.5" stroke="#333" stroke-width="1.5"/><circle cx="9" cy="12.6" r="0.9" fill="#333"/></svg>
<div class="t " style="left:683.4px;top:1578.7191950000001px;font-size:14.15px;font-weight:bold;font-style:normal;font-family:'Liberation Mono',monospace;color:#333;">WARNING</div>
<div class="t " style="left:659.5px;top:1604px;font-size:12.85px;font-weight:normal;font-style:normal;font-family:'Liberation Sans',sans-serif;color:#333;">This is a U.S. General Services Administration Federal Government computer system that is</div>
<div class="t " style="left:1185.5px;top:1605px;font-size:11.95px;font-weight:bold;font-style:normal;font-family:'Liberation Sans',sans-serif;color:#222;">&quot;FOR OFFICIAL USE ONLY.&quot;</div>
<div class="t " style="left:1350.4px;top:1604px;font-size:12.85px;font-weight:normal;font-style:normal;font-family:'Liberation Sans',sans-serif;color:#333;">This system is</div>
<div class="t " style="left:659.5px;top:1620px;font-size:13.4px;font-weight:normal;font-style:normal;font-family:'Liberation Sans',sans-serif;color:#333;">subject to monitoring. Individuals found performing unauthorized activities are subject to disciplinary action including criminal</div>
<div class="t " style="left:659.5px;top:1640px;font-size:12.85px;font-weight:normal;font-style:normal;font-family:'Liberation Sans',sans-serif;color:#333;">prosecution.</div>
<div class="t " style="left:659.5px;top:1675px;font-size:13.15px;font-weight:normal;font-style:normal;font-family:'Liberation Sans',sans-serif;color:#333;">This system contains Controlled Unclassified Information (CUI). All individuals viewing, reproducing or disposing of this information are</div>
<div class="t " style="left:659.5px;top:1694px;font-size:12.55px;font-weight:normal;font-style:normal;font-family:'Liberation Sans',sans-serif;color:#333;">required to protect it in accordance with 32 CFR Part 2002 and GSA Order CIO 2103.2 CUI Policy.</div>
<div style="position:absolute;left:0px;top:1728px;width:1905px;height:109px;background:#43443f"></div>
<div class="t " style="left:480.7px;top:1751px;font-size:19.8px;font-weight:bold;font-style:normal;font-family:'Liberation Sans',sans-serif;color:#fff;">SAM.gov</div>
<div class="t " style="left:480.7px;top:1781px;font-size:20.7px;font-weight:bold;font-style:normal;font-family:'Liberation Sans',sans-serif;color:#fff;">An official website of the U.S. General Services Administration</div>
</body></html>
